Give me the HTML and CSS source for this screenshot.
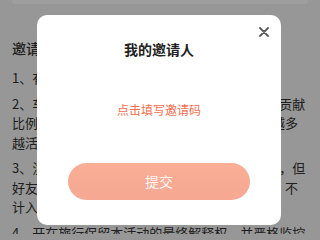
FILE: index.html
```html
<!DOCTYPE html>
<html lang="zh">
<head>
<meta charset="utf-8">
<link rel="stylesheet" href="styles.css">
</head>
<body>
<div class="page">
  <div class="top-card"></div>
  <section class="rules">
    <h2 class="rules-title">邀请规则</h2>
    <p class="rule">1、有效邀请：好友通过邀请码注册。</p>
    <p class="rule">2、车主邀请好友注册成功后，即可获得好友的贡献<br>比例奖励，邀请的好友越多，获得的奖励也就越多<br>越活跃奖励越高。</p>
    <p class="rule">3、注意：好友邀请关系以首次填写邀请码为准，但<br>好友若存在刷单、作弊、虚假注册等违规行为、不<br>计入有效邀请。</p>
    <p class="rule">4、开在旅行保留本活动的最终解释权，并严格监控<br>恶意刷单行为。</p>
  </section>
</div>

<div class="mask">
  <div class="dialog">
    <button class="close" aria-label="关闭">
      <svg viewBox="0 0 10 10" width="10" height="10"><path d="M1 1 L9 9 M9 1 L1 9" stroke="#5a5a5a" stroke-width="1.8" stroke-linecap="round" fill="none"/></svg>
    </button>
    <div class="dialog-title">我的邀请人</div>
    <div class="dialog-link">点击填写邀请码</div>
    <button class="submit">提交</button>
  </div>
</div>
</body>
</html>
```

FILE: styles.css
```css
* { box-sizing: border-box; }
html, body {
  margin: 0;
  padding: 0;
  width: 320px;
  height: 234px;
  overflow: hidden;
}
body {
  background: #f4f4f4;
  font-family: "Noto Sans CJK SC", "Noto Sans", sans-serif;
  color: #333;
}
.page {
  display: flex;
  flex-direction: column;
}
.top-card {
  height: 4px;
  margin: 0 12px;
  background: #fff;
  border-radius: 0 0 8px 8px;
}
.rules {
  padding: 34px 12px 0 12px;
}
.rules-title {
  margin: 0 0 10px;
  font-size: 14px;
  line-height: 20px;
  font-weight: 500;
  color: #333;
}
.rule {
  margin: 0 0 6px;
  font-size: 13px;
  line-height: 19.5px;
  white-space: nowrap;
  color: #333;
}
.mask {
  position: fixed;
  inset: 0;
  background: rgba(0, 0, 0, 0.38);
  display: flex;
  align-items: center;
  justify-content: center;
}
.dialog {
  position: relative;
  width: 244px;
  height: 210px;
  margin-left: -2px;
  margin-top: -1px;
  background: #fff;
  border-radius: 10px;
  padding: 24px 31px 25px;
  display: flex;
  flex-direction: column;
  align-items: center;
}
.close {
  position: absolute;
  top: 12px;
  right: 12px;
  width: 10px;
  height: 10px;
  padding: 0;
  border: 0;
  background: none;
  display: flex;
}
.dialog-title {
  font-size: 14px;
  line-height: 20px;
  font-weight: 700;
  color: #222;
}
.dialog-link {
  margin-top: 42px;
  font-size: 12px;
  line-height: 18px;
  color: #f36d4f;
}
.submit {
  margin-top: auto;
  width: 182px;
  height: 37px;
  border: 0;
  border-radius: 19px;
  background: linear-gradient(#f9ae95, #f6a892);
  color: rgba(255, 255, 255, 0.92);
  font-family: "Noto Sans CJK SC", "Noto Sans", sans-serif;
  font-size: 14px;
  padding: 0;
}
```
